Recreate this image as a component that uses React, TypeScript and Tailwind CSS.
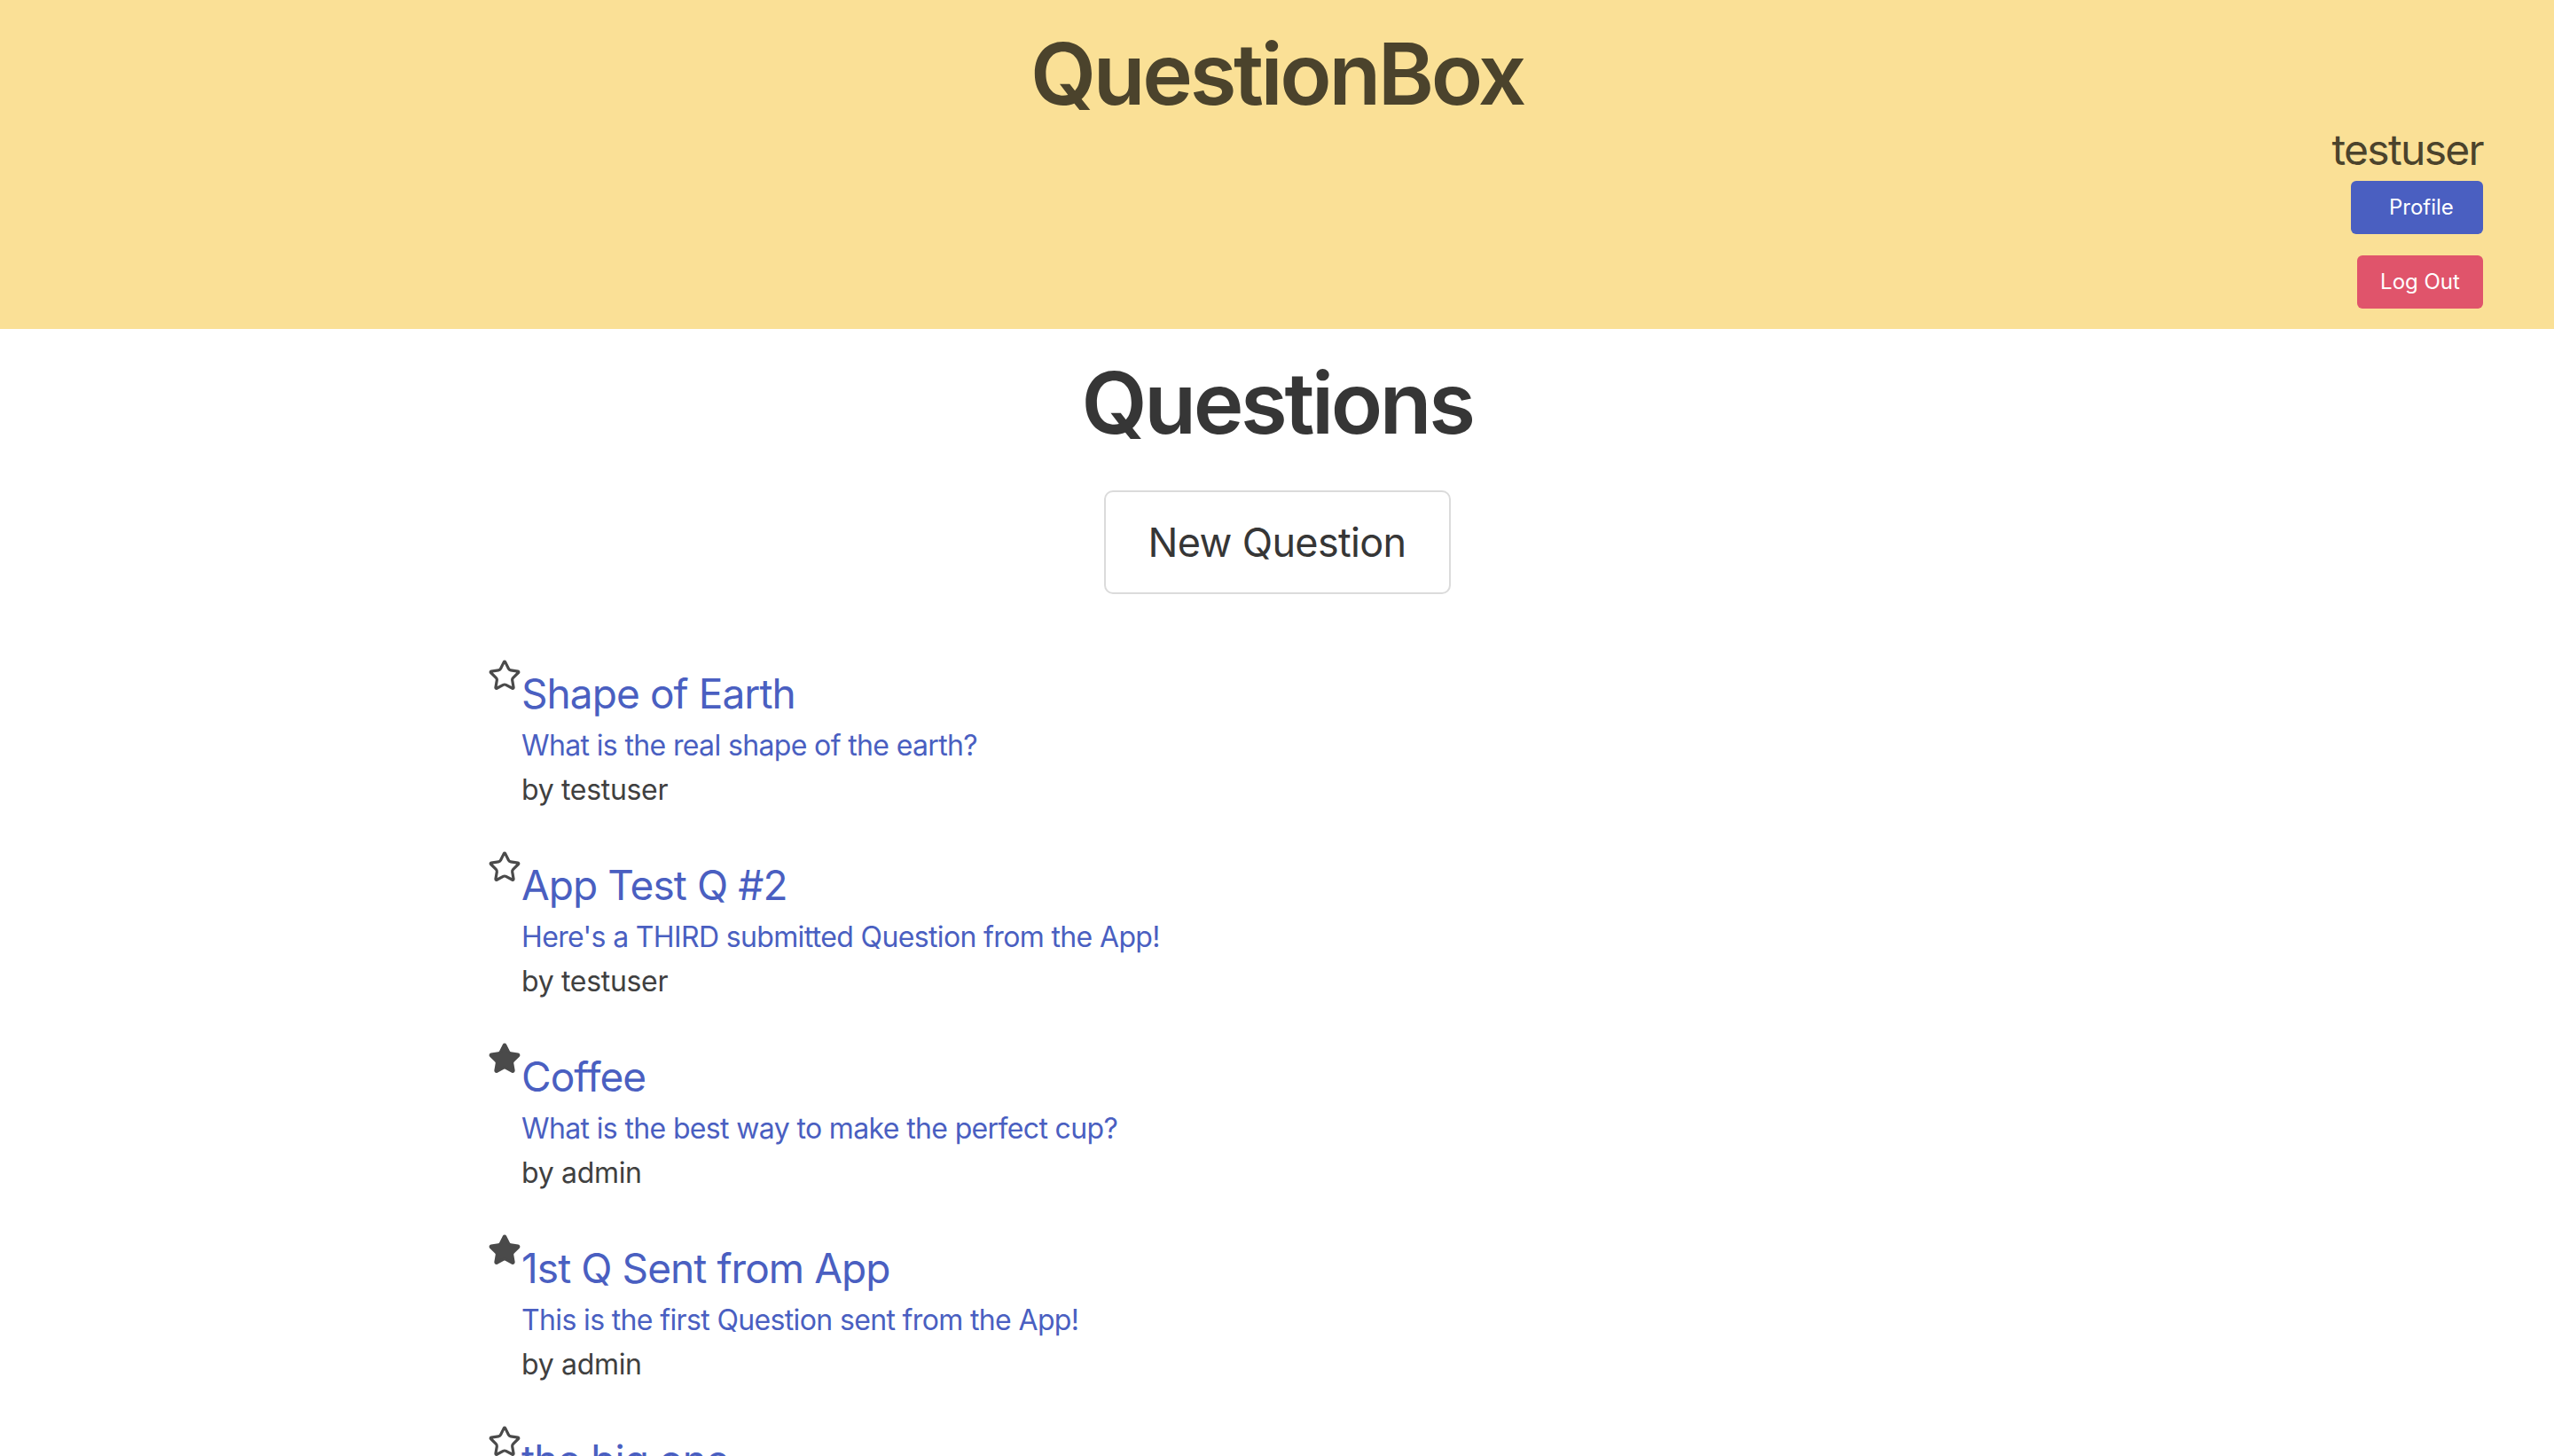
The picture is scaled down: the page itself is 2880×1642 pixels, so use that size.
import React from 'react';
import { Star } from 'lucide-react';

type Question = {
  id: number;
  title: string;
  body: string;
  author: string;
  starred: boolean;
};

const questions: Question[] = [
  { id: 1, title: 'Shape of Earth', body: 'What is the real shape of the earth?', author: 'testuser', starred: false },
  { id: 2, title: 'App Test Q #2', body: "Here's a THIRD submitted Question from the App!", author: 'testuser', starred: false },
  { id: 3, title: 'Coffee', body: 'What is the best way to make the perfect cup?', author: 'admin', starred: true },
  { id: 4, title: '1st Q Sent from App', body: 'This is the first Question sent from the App!', author: 'admin', starred: true },
  { id: 5, title: 'the big one', body: 'What is the meaning of life?', author: 'admin', starred: false },
];

function QuestionItem({ q }: { q: Question }) {
  return (
    <li className="flex items-start">
      <Star
        size={38}
        strokeWidth={2}
        className="mt-[-4px] shrink-0 text-[#4a4a4a]"
        fill={q.starred ? 'currentColor' : 'none'}
      />
      <div className="flex flex-col">
        <a href="#" className="text-[46px] leading-[70px] tracking-[-0.02em] text-[#4a5fc1]">
          {q.title}
        </a>
        <a href="#" className="text-[32px] leading-[48px] tracking-[-0.02em] text-[#4a5fc1]">
          {q.body}
        </a>
        <div className="mt-[2px] text-[32px] leading-[48px] tracking-[-0.01em] text-[#404040]">by {q.author}</div>
      </div>
    </li>
  );
}

export default function App() {
  return (
    <div className="min-h-screen bg-white font-['Inter',sans-serif]">
      <header className="flex h-[371px] flex-col bg-[#fae096] pt-[29px] pb-[23px]">
        <h1 className="text-center text-[96px] leading-[108px] font-semibold tracking-[-0.035em] text-[#4b432c]">
          QuestionBox
        </h1>
        <div className="mt-[2px] flex flex-col items-end pr-[80px]">
          <div className="text-[48px] leading-[60px] tracking-[-0.035em] text-[#4b432c]">testuser</div>
          <button className="mt-[5px] h-[60px] w-[149px] rounded-[6px] bg-[#4a5fc1] pl-[43px] text-left text-[24px] text-white">
            Profile
          </button>
          <button className="mt-[24px] flex h-[60px] w-[142px] items-center justify-center rounded-[6px] bg-[#e0546b] text-[24px] text-white">
            Log Out
          </button>
        </div>
      </header>

      <main className="flex flex-col items-center pt-[29px]">
        <h2 className="text-[96px] leading-[108px] font-semibold tracking-[-0.035em] text-[#363636]">Questions</h2>
        <button className="mt-[45px] flex h-[117px] w-[391px] items-center justify-center rounded-[10px] border-2 border-[#dbdbdb] bg-white text-[45px] tracking-[-0.015em] text-[#363636]">
          New Question
        </button>
        <ul className="mt-[77px] flex w-full flex-col gap-[48px] pl-[550px]">
          {questions.map((q) => (
            <QuestionItem key={q.id} q={q} />
          ))}
        </ul>
      </main>
    </div>
  );
}
